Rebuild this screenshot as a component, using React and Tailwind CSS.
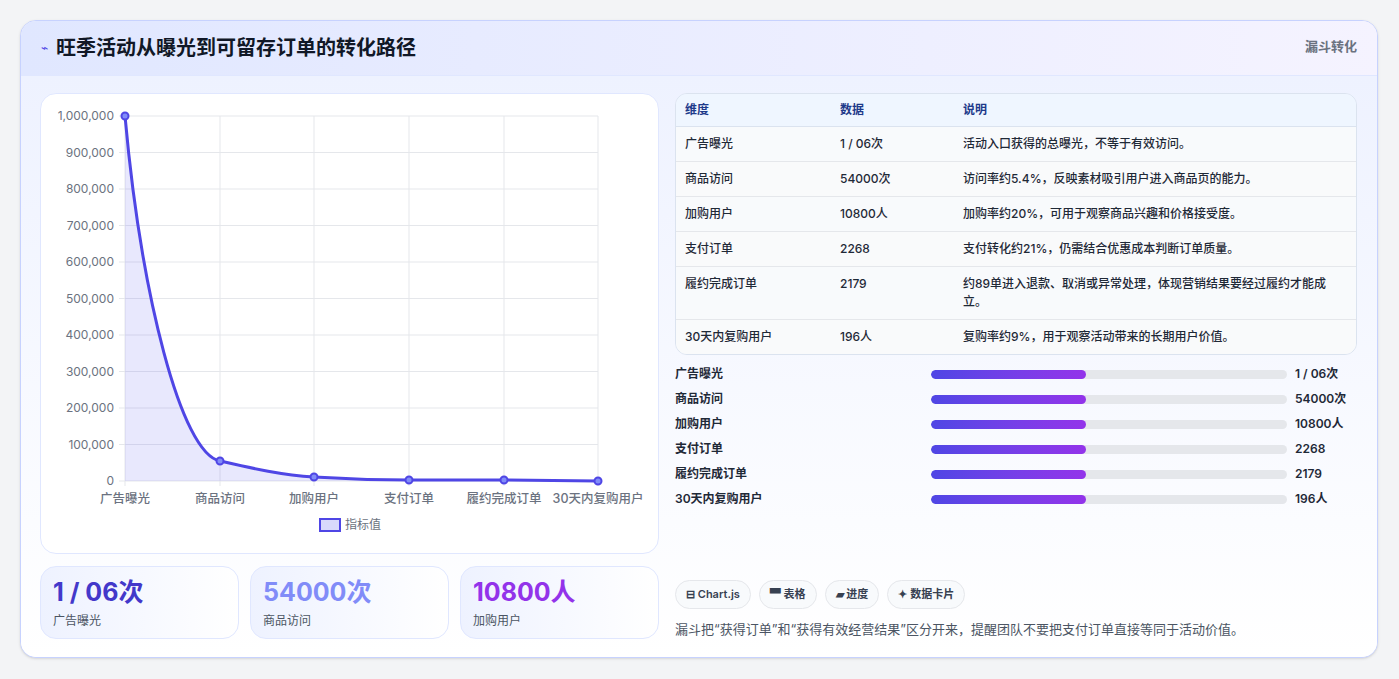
const rows = [
  ["广告曝光", "1 / 06次", "活动入口获得的总曝光，不等于有效访问。"],
  ["商品访问", "54000次", "访问率约5.4%，反映素材吸引用户进入商品页的能力。"],
  ["加购用户", "10800人", "加购率约20%，可用于观察商品兴趣和价格接受度。"],
  ["支付订单", "2268", "支付转化约21%，仍需结合优惠成本判断订单质量。"],
  ["履约完成订单", "2179", "约89单进入退款、取消或异常处理，体现营销结果要经过履约才能成立。"],
  ["30天内复购用户", "196人", "复购率约9%，用于观察活动带来的长期用户价值。"],
];

const yTicks = ["1,000,000", "900,000", "800,000", "700,000", "600,000", "500,000", "400,000", "300,000", "200,000", "100,000", "0"];
const xs = [84, 179, 273, 368, 463, 557];
const ys = [22, 367, 383, 386, 386, 387];

function Chart() {
  const line = "M84,22 C100,200 140,360 179,367 C210,374 240,381 273,383 C305,385 335,386 368,386 L463,386 L557,387";
  return (
    <svg width="619" height="461" viewBox="0 0 619 461" style={{ fontFamily: "Inter, 'Noto Sans CJK SC', sans-serif" }}>
      {yTicks.map((t, i) => {
        const y = 22 + i * 36.5;
        return (
          <g key={t}>
            <line x1="78" x2="557" y1={y} y2={y} stroke="#e5e7eb" />
            <text x="73" y={y + 4} textAnchor="end" fontSize="12" fill="#6b7280">{t}</text>
          </g>
        );
      })}
      {xs.map((x) => (
        <line key={x} x1={x} x2={x} y1="22" y2="392" stroke="#e5e7eb" />
      ))}
      <path d={line + " L557,387 L84,387 Z"} fill="rgba(99,102,241,0.15)" />
      <path d={line} fill="none" stroke="#4f46e5" strokeWidth="3" />
      {xs.map((x, i) => (
        <circle key={x} cx={x} cy={ys[i]} r="3.5" fill="#818cf8" stroke="#4f46e5" strokeWidth="2" />
      ))}
      {rows.map((r, i) => (
        <text key={r[0]} x={xs[i]} y="409" textAnchor="middle" fontSize="12.5" fontWeight="500" fill="#6b7280">{r[0]}</text>
      ))}
      <rect x="279" y="425" width="20" height="12" fill="rgba(99,102,241,0.25)" stroke="#4f46e5" strokeWidth="2" />
      <text x="304" y="435" fontSize="12" fill="#6b7280">指标值</text>
    </svg>
  );
}

export default function App() {
  return (
    <div className="w-[1399px] h-[679px] bg-[#f3f4f6] p-5 pr-[21px]" style={{ fontFamily: "Inter, 'Noto Sans CJK SC', sans-serif" }}>
      <div className="h-[638px] bg-white rounded-2xl border border-[#c7d2fe] overflow-hidden shadow-sm flex flex-col">
        <div className="h-[55px] shrink-0 flex items-center justify-between px-5 bg-gradient-to-r from-[#e0e7ff] to-[#f5f3ff] border-b border-[#e0e7ff]">
          <div className="flex items-center gap-2">
            <span className="text-[#4f46e5] text-xs">⌁</span>
            <h1 className="text-[20px] font-bold text-[#111827]">旺季活动从曝光到可留存订单的转化路径</h1>
          </div>
          <span className="text-[13px] font-semibold text-[#6b7280] self-start mt-4">漏斗转化</span>
        </div>
        <div className="flex-1 flex gap-4 pl-[19px] pr-5 pt-[17px] bg-gradient-to-b from-[#eef2ff] to-white">
          <div className="w-[619px] flex flex-col gap-3">
            <div className="h-[461px] bg-white rounded-2xl border border-[#e0e7ff]">
              <Chart />
            </div>
            <div className="grid grid-cols-3 gap-[11px]">
              {[
                ["1 / 06次", "广告曝光", "text-[#4338ca]"],
                ["54000次", "商品访问", "text-[#818cf8]"],
                ["10800人", "加购用户", "text-[#9333ea]"],
              ].map(([v, l, c]) => (
                <div key={l} className="h-[73px] rounded-2xl border border-[#e0e7ff] bg-gradient-to-r from-[#eef2ff] to-white px-3 pt-2">
                  <div className={`text-[25px] font-bold leading-[34px] ${c}`}>{v}</div>
                  <div className="text-xs text-[#4b5563] mt-1">{l}</div>
                </div>
              ))}
            </div>
          </div>
          <div className="flex-1 flex flex-col">
            <div className="rounded-xl border border-[#dbe3ef] overflow-hidden text-xs">
              <div className="flex h-[33px] items-center bg-[#eff6ff] border-b border-[#dbe3ef] text-[#1e3a8a] font-semibold">
                <div className="w-[164px] pl-[9px]">维度</div>
                <div className="w-[123px]">数据</div>
                <div className="flex-1">说明</div>
              </div>
              {rows.map((r, i) => (
                <div key={r[0]} className={`flex py-2 leading-[18px] text-[#1f2937] font-medium ${i < 5 ? "border-b border-[#e5e7eb]" : ""} ${i % 2 ? "bg-[#f9fafb]" : "bg-[#f8fafc]"}`}>
                  <div className="w-[164px] pl-[9px]">{r[0]}</div>
                  <div className="w-[123px]">{r[1]}</div>
                  <div className="flex-1 pr-6">{r[2]}</div>
                </div>
              ))}
            </div>
            <div className="flex flex-col gap-[7px] mt-[10px]">
              {rows.map((r) => (
                <div key={r[0]} className="flex items-center h-[18px] text-xs font-semibold text-[#1f2937]">
                  <div className="w-[256px]">{r[0]}</div>
                  <div className="w-[356px] h-[9px] rounded-full bg-[#e5e7eb] overflow-hidden">
                    <div className="h-full w-[155px] rounded-full bg-gradient-to-r from-[#4f46e5] to-[#9333ea]" />
                  </div>
                  <div className="ml-2">{r[1]}</div>
                </div>
              ))}
            </div>
            <div className="flex gap-2 mt-[72px]">
              {["⊟ Chart.js", "▀ 表格", "▰ 进度", "✦ 数据卡片"].map((t) => (
                <span key={t} className="h-[29px] px-[10px] flex items-center rounded-full border border-[#e5e7eb] bg-[#f8fafc] text-[11px] font-semibold text-[#374151]">{t}</span>
              ))}
            </div>
            <p className="mt-[11px] text-[13px] text-[#4b5563]">漏斗把“获得订单”和“获得有效经营结果”区分开来，提醒团队不要把支付订单直接等同于活动价值。</p>
          </div>
        </div>
      </div>
    </div>
  );
}
